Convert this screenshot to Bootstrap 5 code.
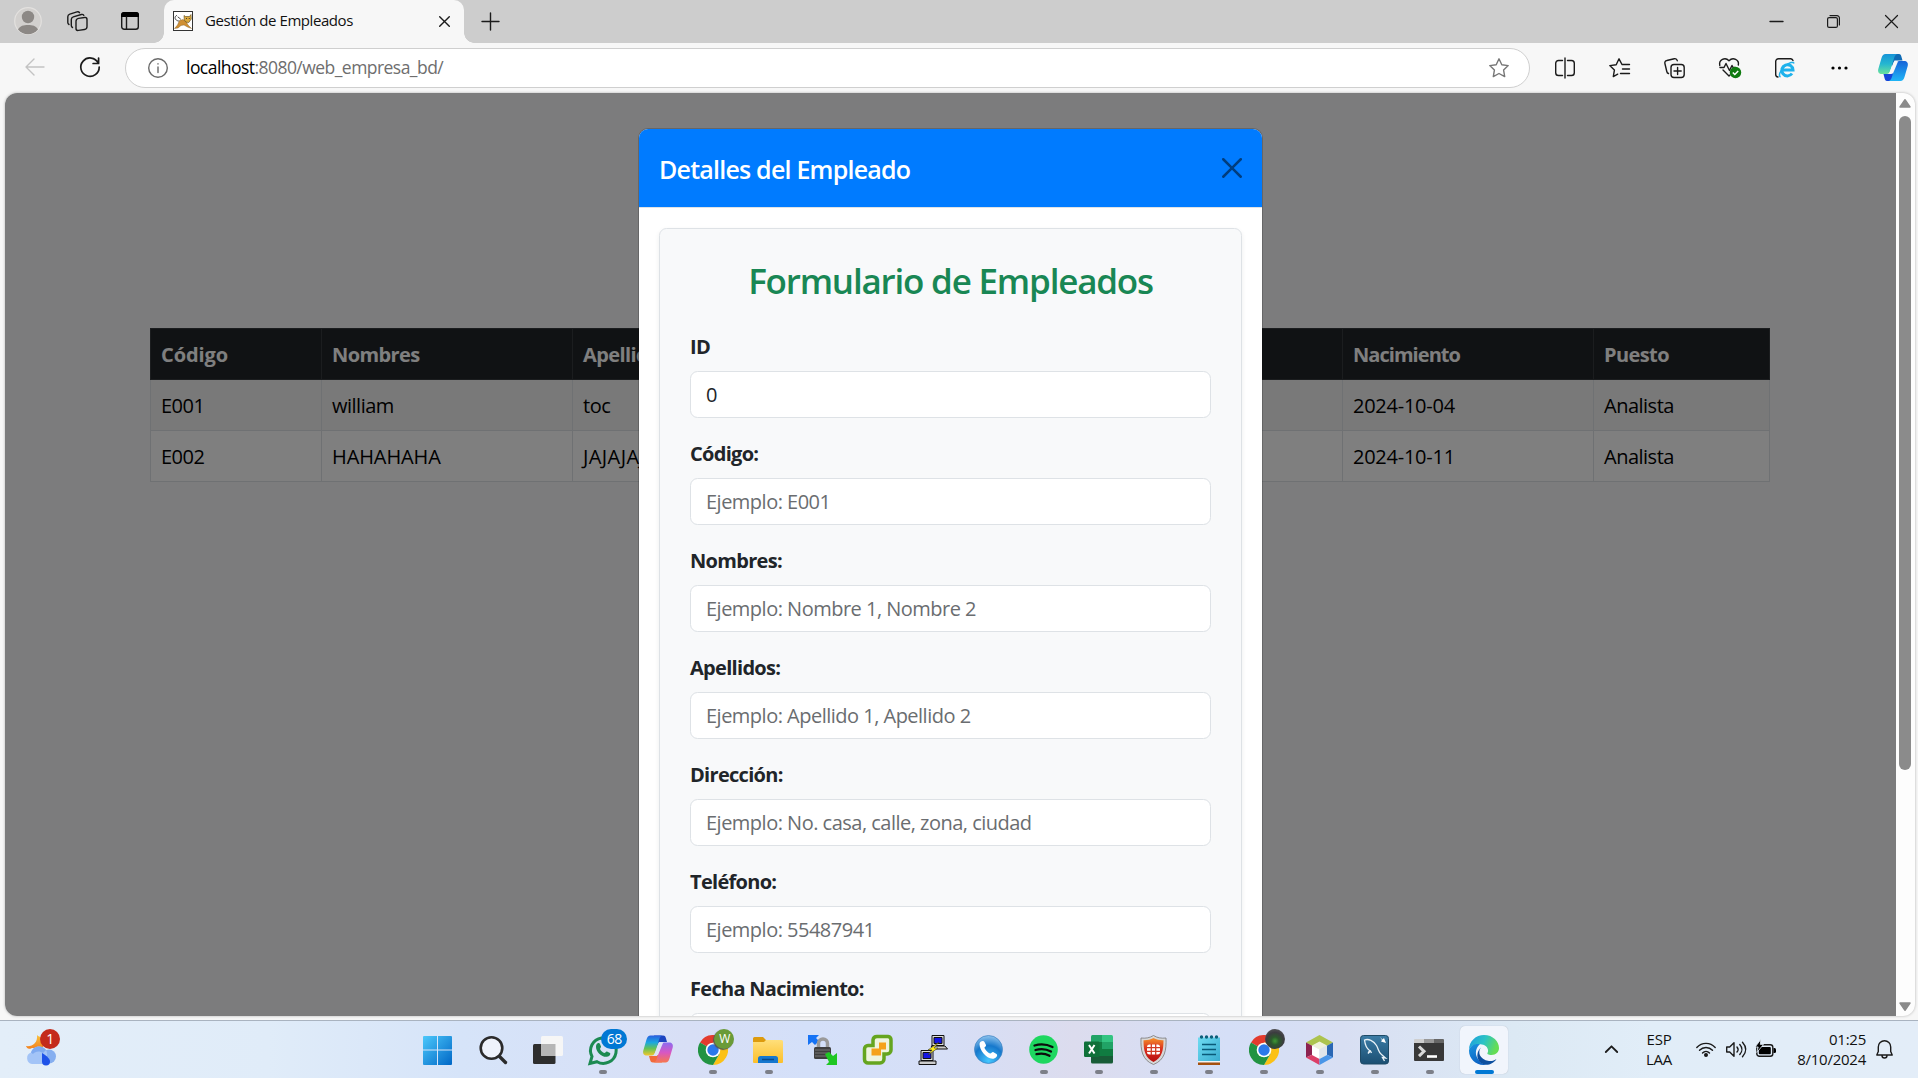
<!DOCTYPE html>
<html lang="es">
<head>
<meta charset="utf-8">
<title>Gestión de Empleados</title>
<link href="https://cdn.jsdelivr.net/npm/bootstrap@5.3.0/dist/css/bootstrap.min.css" rel="stylesheet">
<style>
html{font-size:20px}
body{width:1918px;height:1078px;overflow:hidden;background:#f7f7f7;font-family:"Open Sans","Noto Sans",sans-serif;letter-spacing:-.5px}
svg{display:block;flex:none;overflow:visible}
.ln{fill:none;stroke:#1b1b1b;stroke-width:1.4;stroke-linecap:round;stroke-linejoin:round}
/* window chrome */
.tabstrip{height:43px;background:#cdcdcd;padding-bottom:1px}
.strip-left{width:164px;padding-left:14px}
.tab-active{width:300px;height:43px;margin-bottom:-1px;background:#f7f7f7;border-radius:10px 10px 0 0;padding:0 14px 1px 9px;position:relative;font-size:15px;color:#111;letter-spacing:-.43px}
.tab-active::before,.tab-active::after{content:"";position:absolute;bottom:0;width:10px;height:10px}
.tab-active::before{left:-10px;background:radial-gradient(circle at 0 0,transparent 9.5px,#f7f7f7 10px)}
.tab-active::after{right:-10px;background:radial-gradient(circle at 100% 0,transparent 9.5px,#f7f7f7 10px)}
.tab-label{margin-left:12px;padding-bottom:2px}
.win-btns{padding-right:20px}
.toolbar{height:50px;padding:5px 0 0 25px}
.nav-btns{height:39px;gap:36px;padding-bottom:1px}
.omnibox{width:1405px;height:40px;margin-left:25px;border:1px solid #cfcfcf;border-radius:20px;background:#fff;padding:0 20px 1px 22px;font-size:17.5px;letter-spacing:-.54px;color:#6e6e6e}
.tool-icons{height:39px;margin-left:7px}
.slot{width:55px;display:flex;justify-content:center;align-items:center}
.slot:last-child{width:51px}
/* page */
.frame{height:923px;margin-left:5px;width:1910px;border-radius:12px;background:#fdfdfd;box-shadow:0 0 3px rgba(0,0,0,.28)}
.doc{width:1891px;background:#f8f9fa;position:relative}
.emp-wrap{width:1620px;margin:235px 0 0 145px}
.emp-tbl{table-layout:fixed;--bs-table-color:#000;--bs-table-striped-color:#000;--bs-table-bg:#fff}
.emp-tbl th,.emp-tbl td{white-space:nowrap;padding:11px 10px 9px}
.emp-tbl th{letter-spacing:-.6px}
.emp-tbl th.wide{letter-spacing:-.1px}
.emp-tbl th.tight{letter-spacing:-.95px}
.emp-tbl td.fecha{letter-spacing:-.25px}
.emp-tbl td.caps{letter-spacing:-.1px}
.emp-tbl td.caps-j{letter-spacing:.4px}
.shade.modal{position:absolute;inset:0;z-index:5;background:rgba(0,0,0,.5);overflow:hidden}
.dlg{width:625px;margin:35px auto 0;height:1300px}
.dlg .modal-header{background:#007bff}
.dlg .modal-title{font-weight:600;letter-spacing:-.78px;padding-top:2px;margin-bottom:-2px}
.form-title{font-size:35px;font-weight:600;letter-spacing:-1.2px;line-height:42px;padding-top:1px;margin-top:0}
h3.form-title.mb-4{margin-bottom:29px!important}
.form-label{letter-spacing:-.7px;padding-top:1px;margin-bottom:9px}
.form-control{letter-spacing:-.51px;padding-top:8.5px;padding-bottom:6.5px}
.form-control::placeholder{color:#6a6d70}
.sbar{width:19px;padding:6px 1px 5px 0}
.thumb{width:12px;height:654px;border-radius:6px;background:#8b8b8b;margin-top:8px}
/* taskbar */
.gap-strip{height:4px}
.tbar{height:58px;border-top:1px solid #a9b3c0;background:linear-gradient(90deg,#e3eef9 0,#e0ecf9 14%,#d6e4f9 24%,#d8dff6 36%,#d4e0f9 42%,#d6dff7 49%,#dcdcee 56%,#d5dff7 64%,#d8dff3 70%,#dce9f4 79%,#e1edf8 86%,#e3edf8 100%);color:#111}
.tbar-left{width:410px;padding:14px 0 0 26px}
.app{width:55.1px;height:57px;padding-top:14px;position:relative}
.app::after{content:"";position:absolute;left:24px;top:49px;width:8px;height:4px;border-radius:2px}
.app.run::after{background:#7c7f88}
.app.now::after{background:#0078d4;left:18px;width:19px}
.app.now::before{content:"";position:absolute;left:3px;top:5px;width:48px;height:48px;border-radius:5px;background:#f1f5fc;box-shadow:0 0 1px #a8b0bd}
.app svg{position:relative;z-index:1}
.pip{position:absolute;z-index:2;top:8px;height:20px;border-radius:10px;color:#fff;font-size:14px;line-height:20px;text-align:center;letter-spacing:-.4px}
.tray{font-size:15px;line-height:20px;letter-spacing:-.25px;padding:0 25px 1px 0}
</style>
<script src="https://cdn.jsdelivr.net/npm/bootstrap@5.3.0/dist/js/bootstrap.bundle.min.js"></script>
</head>
<body class="d-flex flex-column">
<svg width="0" height="0" class="position-absolute">
<defs>
<linearGradient id="gWin" x2="1" y2="1"><stop stop-color="#4cc8fb"/><stop offset="1" stop-color="#0067c6"/></linearGradient>
<linearGradient id="gFold" x2="0" y2="1"><stop stop-color="#ffdf7a"/><stop offset="1" stop-color="#fcbf2a"/></linearGradient>
<linearGradient id="gCl" x2="0" y2="1"><stop stop-color="#2a5fe0"/><stop offset=".35" stop-color="#1ba7e0"/><stop offset=".65" stop-color="#64c356"/><stop offset="1" stop-color="#f4c62c"/></linearGradient>
<linearGradient id="gCr" x2="0" y2="1"><stop stop-color="#8b6cf0"/><stop offset=".5" stop-color="#d757c4"/><stop offset="1" stop-color="#f7774d"/></linearGradient>
<linearGradient id="gTl" x2="0" y2="1"><stop stop-color="#1694d8"/><stop offset=".5" stop-color="#25b7d0"/><stop offset="1" stop-color="#6be29b"/></linearGradient>
<linearGradient id="gTr" x2="0" y2="1"><stop stop-color="#1764d8"/><stop offset="1" stop-color="#1fb5f6"/></linearGradient>
<linearGradient id="gE1" x2="1" y2=".3"><stop stop-color="#1b9be0"/><stop offset=".55" stop-color="#2bc3c5"/><stop offset="1" stop-color="#64dd55"/></linearGradient>
<linearGradient id="gE2" x2=".4" y2="1"><stop stop-color="#1a95df"/><stop offset="1" stop-color="#0b62c4"/></linearGradient>
<radialGradient id="gPh" cx=".5" cy=".9" r=".9"><stop stop-color="#45c8ff"/><stop offset=".6" stop-color="#1678cc"/><stop offset="1" stop-color="#8fc4ee"/></radialGradient>
<linearGradient id="gSh" x2="0" y2="1"><stop stop-color="#f5902a"/><stop offset=".5" stop-color="#d9281c"/><stop offset="1" stop-color="#b5120f"/></linearGradient>
<linearGradient id="gSql" x2="0" y2="1"><stop stop-color="#3b7ca6"/><stop offset="1" stop-color="#1b4f72"/></linearGradient>
<linearGradient id="gNote" x2="1" y2="1"><stop stop-color="#6fdcf2"/><stop offset="1" stop-color="#38abcf"/></linearGradient>
<linearGradient id="gMoon" x2="0" y2="1"><stop stop-color="#f9c23c"/><stop offset="1" stop-color="#f3811f"/></linearGradient>
<linearGradient id="gCloud" x2="0" y2="1"><stop stop-color="#78a8f2"/><stop offset=".6" stop-color="#b8d3fa"/><stop offset="1" stop-color="#6d9cec"/></linearGradient>
<symbol id="chrome" viewBox="0 0 30 30"><path d="M15 15 2 7.500A15 15 0 0 1 28 7.500H15z" fill="#e33b2e"/><path d="M15 7.500H28A15 15 0 0 1 15 30L21.500 18.700z" fill="#fbc116"/><path d="M2 7.500A15 15 0 0 0 15 30L21.500 18.700 15 15z" fill="#229342"/><circle cx="15" cy="15" r="7.300" fill="#fff"/><circle cx="15" cy="15" r="5.700" fill="#2c78ea"/></symbol>
</defs>
</svg>

<header class="tabstrip d-flex align-items-center flex-shrink-0">
  <div class="strip-left d-flex align-items-center">
    <svg width="28" height="28" viewBox="0 0 28 28"><circle cx="14" cy="14" r="13.3" fill="#d2d0ce" stroke="#e3e1df" stroke-width="1.2"/><circle cx="14" cy="10" r="6.2" fill="#8c8885"/><path d="M4 22.5c2-3.8 5.500-4.500 10-4.500s8 .7 10 4.500a13 13 0 0 1-20 0z" fill="#8c8885"/></svg>
    <svg class="ln" style="margin-left:25px" width="21" height="21" viewBox="0 0 21 21"><rect x="9" y="7" width="11" height="12" rx="2.500" transform="skewY(-9) translate(0 2.200)"/><path d="M5.500 16.500c-1-.5-1.200-1-1.200-2V8.500c0-1.500.7-2.300 2-2.700l8-2.300c1.200-.3 2 0 2.500.8M2 13.500c-1-.5-1.200-1-1.200-2V5.800c0-1.500.7-2.300 2-2.700L10 .9c1.200-.3 2 0 2.500.8"/></svg>
    <svg style="margin-left:33px" width="18" height="18" viewBox="0 0 18 18"><rect x=".7" y=".7" width="16.600" height="16.600" rx="2.500" class="ln"/><path d="M0 5V3a3 3 0 0 1 3-3h12a3 3 0 0 1 3 3v2z"/><path d="M5.500 5v12" class="ln"/></svg>
  </div>
  <div class="tab-active d-flex align-items-center">
    <svg width="20" height="20" viewBox="0 0 20 20"><rect x=".5" y=".5" width="19" height="19" fill="#fff" stroke="#333"/><path d="M1.500 17.500l3-3.500 2-4.500 3.500-1 3.500 2.500 1.500 3 3.500 3.500-4-1.500-3.500-2-3 .5-3 2.500z" fill="#cf8f33" stroke="#7a5620" stroke-width=".4"/><path d="M11 4.500l1.500 1h4L18 3.500l.3 4.500-2.500 3.500-3-.5-1.500-2z" fill="#dca93c" stroke="#5b4515" stroke-width=".6"/><path d="M13 7.500h.8M15.800 7.500h.8" stroke="#222"/><path d="M5.500 10C1.500 9.500 1 5.500 3.500 4.500M5 6l2.500 2" class="ln" style="stroke-width:.8"/></svg>
    <span class="tab-label">Gestión de Empleados</span>
    <svg class="ln ms-auto" width="11" height="11" viewBox="0 0 11 11"><path d="M.7.7l9.600 9.600M10.300.7L.7 10.300"/></svg>
  </div>
  <svg class="ln" style="margin-left:18px" width="17" height="17" viewBox="0 0 17 17"><path d="M8.500 0v17M0 8.500h17"/></svg>
  <div class="win-btns d-flex align-items-center ms-auto">
    <svg class="ln" width="13" height="13" viewBox="0 0 13 13"><path d="M0 6.500h13"/></svg>
    <svg class="ln" style="margin-left:44px;stroke-width:1.200" width="13" height="13" viewBox="0 0 13 13"><rect x=".6" y="2.600" width="9.800" height="9.800" rx="1.500"/><path d="M3 .6h7a2.400 2.400 0 0 1 2.400 2.400v7"/></svg>
    <svg class="ln" style="margin-left:45px;stroke-width:1.200" width="13" height="13" viewBox="0 0 13 13"><path d="M.5.5l12 12M12.500.5l-12 12"/></svg>
  </div>
</header>

<div class="toolbar d-flex flex-shrink-0">
  <div class="nav-btns d-flex align-items-center">
    <svg class="ln" style="stroke:#c3c3c3" width="19" height="18" viewBox="0 0 19 18"><path d="M9 1L1 9l8 8M1 9h18"/></svg>
    <svg class="ln" style="stroke-width:1.700" width="20" height="20" viewBox="0 0 20 20"><path d="M18.200 6A9.200 9.200 0 1 0 19.200 10M18.600 1v5.500h-5.500"/></svg>
  </div>
  <div class="omnibox d-flex align-items-center">
    <svg class="ln" style="stroke:#6a6a6a" width="20" height="20" viewBox="0 0 20 20"><circle cx="10" cy="10" r="9.300"/><path d="M10 9v5.500M10 5.800v.3"/></svg>
    <span style="margin-left:18px"><span class="text-black">localhost</span>:8080/web_empresa_bd/</span>
    <svg class="ln ms-auto" style="stroke:#777" width="20" height="20" viewBox="0 0 20 20"><path d="M10 .8l2.800 5.900 6.400.9-4.600 4.500 1.100 6.500L10 15.500l-5.700 3.100 1.100-6.500L.8 7.600l6.400-.9z"/></svg>
  </div>
  <div class="tool-icons d-flex">
    <span class="slot"><svg class="ln" width="20" height="20" viewBox="0 0 20 20"><path d="M10 0v20M7.500 2.500H3.500A2.800 2.800 0 0 0 .7 5.300v9.400a2.800 2.800 0 0 0 2.800 2.800h4M12.500 2.500h4a2.800 2.800 0 0 1 2.800 2.800v9.400a2.800 2.800 0 0 1-2.800 2.800h-4"/></svg></span>
    <span class="slot"><svg class="ln" width="21" height="20" viewBox="0 0 21 20"><path d="M13 6.500L10 .8 7.200 6.700.8 7.600l4.600 4.500-1.100 6.500 4.400-2.400M13 6.500h7.500M13.500 11h7M11.500 15.500h9"/></svg></span>
    <span class="slot"><svg class="ln" width="21" height="20" viewBox="0 0 21 20"><rect x="7" y="6.500" width="13.200" height="13" rx="3"/><path d="M13.600 9.500v7M10 13h7.200M4.500 15.500c-1-.3-1.500-1-1.700-2L.9 5.500C.5 4 1.300 2.800 2.800 2.500l7.500-1.800c1.500-.3 2.600.4 3 2"/></svg></span>
    <span class="slot"><svg width="22" height="21" viewBox="0 0 22 21"><path class="ln" d="M.8 8.500C-.5 3 6-.5 10 3.800 14-.5 20.500 3 19.300 8M4 13l6 6 1-1M1 10.500h4l2-4 3.500 7 2.500-5 1 2h2"/><circle cx="16.500" cy="15.500" r="5.700" fill="#0f7b10"/><path d="M13.800 15.500l2 2 3.400-3.600" fill="none" stroke="#fff" stroke-width="1.500"/></svg></span>
    <span class="slot"><svg width="20" height="20" viewBox="0 0 20 20"><path class="ln" d="M3 19a2.500 2.500 0 0 1-2.300-2.500v-13A2.800 2.800 0 0 1 3.500.7h12.300A2.800 2.800 0 0 1 18 2.500"/><path d="M17 15.500A5.600 5.600 0 1 1 18 12H7.500" fill="none" stroke="#1fb2ec" stroke-width="3"/><path d="M5.500 19c-2-1-1-6 4-10.500s9-5 9.500-3" fill="none" stroke="#1fb2ec" stroke-width="1.500"/></svg></span>
    <span class="slot"><svg width="17" height="4" viewBox="0 0 17 4"><circle cx="2" cy="2" r="1.600"/><circle cx="8.500" cy="2" r="1.600"/><circle cx="15" cy="2" r="1.600"/></svg></span>
    <span class="slot"><svg width="30" height="27" viewBox="0 0 30 27"><path d="M21 0c1.500 0 2 1 2.500 3l1 3.500h-8L14 13 11 0z" fill="#0f6bb5"/><path d="M9 27c-1.500 0-2-1-2.500-3L5.500 20h8l3-6 3 13z" fill="#1646d8"/><path d="M7.500 0H19c-2 1-2.700 3-3.500 6l-3 10c-.7 2.500-2 4-4 4H4c-3 0-4.500-2-3.700-5L3.500 4C4.300 1.300 5.500 0 7.500 0z" fill="url(#gTl)"/><path d="M22.500 27H11c2-1 2.700-3 3.500-6l3-10c.7-2.500 2-4 4-4H26c3 0 4.500 2 3.700 5l-3.200 11c-.8 2.700-2 4-4 4z" fill="url(#gTr)"/><path d="M16 7.500h4l-5 12h-4z" fill="#f7f7f7"/></svg></span>
  </div>
</div>

<main class="frame d-flex overflow-hidden flex-shrink-0">
  <section class="doc overflow-hidden">
    <div class="emp-wrap">
      <table class="table table-bordered table-striped emp-tbl mb-0">
        <colgroup><col style="width:171px"><col style="width:251px"><col style="width:250px"><col style="width:260px"><col style="width:260px"><col style="width:251px"><col></colgroup>
        <thead class="table-dark"><tr><th class="wide">Código</th><th>Nombres</th><th>Apellidos</th><th></th><th></th><th class="tight">Nacimiento</th><th>Puesto</th></tr></thead>
        <tbody>
          <tr><td>E001</td><td>william</td><td>toc</td><td></td><td></td><td class="fecha">2024-10-04</td><td>Analista</td></tr>
          <tr><td>E002</td><td class="caps">HAHAHAHA</td><td class="caps-j">JAJAJAJA</td><td></td><td></td><td class="fecha">2024-10-11</td><td>Analista</td></tr>
        </tbody>
      </table>
    </div>
    <div class="shade modal d-block">
      <div class="dlg modal-content">
        <div class="modal-header">
          <h5 class="modal-title text-white">Detalles del Empleado</h5>
          <button type="button" class="btn-close" aria-label="Cerrar"></button>
        </div>
        <div class="modal-body">
          <form class="border rounded bg-light shadow-sm p-4">
            <h3 class="form-title text-center text-success mb-4">Formulario de Empleados</h3>
            <div class="mb-3"><label class="form-label fw-bold">ID</label><input class="form-control" value="0"></div>
            <div class="mb-3"><label class="form-label fw-bold">Código:</label><input class="form-control" placeholder="Ejemplo: E001"></div>
            <div class="mb-3"><label class="form-label fw-bold">Nombres:</label><input class="form-control" placeholder="Ejemplo: Nombre 1, Nombre 2"></div>
            <div class="mb-3"><label class="form-label fw-bold">Apellidos:</label><input class="form-control" placeholder="Ejemplo: Apellido 1, Apellido 2"></div>
            <div class="mb-3"><label class="form-label fw-bold">Dirección:</label><input class="form-control" placeholder="Ejemplo: No. casa, calle, zona, ciudad"></div>
            <div class="mb-3"><label class="form-label fw-bold">Teléfono:</label><input class="form-control" placeholder="Ejemplo: 55487941"></div>
            <div class="mb-3"><label class="form-label fw-bold">Fecha Nacimiento:</label><input class="form-control"></div>
          </form>
        </div>
      </div>
    </div>
  </section>
  <div class="sbar d-flex flex-column align-items-center">
    <svg width="12" height="9" viewBox="0 0 12 9"><path d="M6 .8L11 8H1z" fill="#8b8b8b" stroke="#8b8b8b" stroke-width="1.500" stroke-linejoin="round"/></svg>
    <div class="thumb"></div>
    <svg class="mt-auto" width="12" height="9" viewBox="0 0 12 9"><path d="M6 8.200L1 1h10z" fill="#8b8b8b" stroke="#8b8b8b" stroke-width="1.500" stroke-linejoin="round"/></svg>
  </div>
</main>
<div class="gap-strip flex-shrink-0"></div>

<footer class="tbar d-flex flex-shrink-0">
  <div class="tbar-left position-relative">
    <svg width="30" height="30" viewBox="0 0 30 30"><path d="M11 0c3 3 5 1 6 4v9H6C2 15 1 13 0 11c6 1 12-3 11-11z" fill="url(#gMoon)"/><circle cx="23" cy="21.500" r="7" fill="#86aff0"/><path d="M6 29a6 6 0 0 1-1-11.500A8.500 8.500 0 0 1 20 15c2 3 1 10 0 14z" fill="#a3c4f7"/><path d="M5 17.500A8.500 8.500 0 0 1 20 15l-3 3c-3-2.500-8-2-10 1z" fill="#7faaf0"/><path d="M16 18c5 3 8 6 8 8.500a4 4 0 0 1-8 0z" fill="#1e52e8"/></svg>
    <span class="pip" style="left:40px;width:20px;background:#c42b1c">1</span>
  </div>
  <div class="d-flex">
    <div class="app d-flex justify-content-center"><svg width="29" height="30" viewBox="0 0 29 30"><path d="M1 1h13v13.500H0V2a1 1 0 0 1 1-1zM15 1h13a1 1 0 0 1 1 1v12.500H15zM0 15.500h14V30H1a1 1 0 0 1-1-1zM15 15.500h14V29a1 1 0 0 1-1 1H15z" fill="url(#gWin)"/></svg></div>
    <div class="app d-flex justify-content-center"><svg width="28" height="30" viewBox="0 0 28 30"><circle cx="12.500" cy="13" r="10.800" fill="#eef2fb" stroke="#2b2b2b" stroke-width="2.600"/><path d="M20.500 21.500l6 6" stroke="#2b2b2b" stroke-width="3.400" stroke-linecap="round"/></svg></div>
    <div class="app d-flex justify-content-center"><svg width="30" height="30" viewBox="0 0 30 30"><rect x="0" y="9" width="22.500" height="20" rx="1.500" fill="#2e2e2e"/><rect x="8" y="1" width="22" height="20" rx="1.500" fill="#f6f6f6"/><path d="M8 9h14.500v12H9.500A1.500 1.500 0 0 1 8 19.500z" fill="#b6b6b6"/></svg></div>
    <div class="app run d-flex justify-content-center"><svg width="30" height="30" viewBox="0 0 30 30"><path d="M2 28.500l2-7A12.800 12.800 0 1 1 9 26.700z" fill="none" stroke="#1c8a52" stroke-width="3"/><path d="M8.500 9.500c1-2 3-2 3.500-.5l1 2.500c0 1.200-1 1.700-1 2.500 1 2 2.500 3.500 4.500 4 1 0 1.500-2 2.500-1.500l3 1.500c1 1-.5 3.500-3 3.800C14 22.500 8 17 8 12c0-1 0-1.800.5-2.500z" fill="#1c8a52"/></svg><span class="pip" style="left:26px;width:26px;background:#0078d4">68</span></div>
    <div class="app d-flex justify-content-center"><svg width="30" height="28" viewBox="0 0 30 27"><path d="M20 0c2 0 2.500 1 3 3l1 3.500h-8L13 12 11 0z" fill="#1c44c0"/><path d="M10 27c-2 0-2.500-1-3-3L6 20.500h8l3-5.500 2 12z" fill="#f26a3a"/><path d="M7.500 0H19c-2 1-2.700 3-3.500 6l-3 10c-.7 2.500-2 4-4 4H4c-3 0-4.500-2-3.700-5L3.500 4C4.300 1.300 5.500 0 7.500 0z" fill="url(#gCl)"/><path d="M22.500 27H11c2-1 2.700-3 3.500-6l3-10c.7-2.500 2-4 4-4H26c3 0 4.500 2 3.700 5l-3.200 11c-.8 2.700-2 4-4 4z" fill="url(#gCr)"/><path d="M16 7.500h4l-5 12h-4z" fill="#dfe1f6"/></svg></div>
    <div class="app run d-flex justify-content-center"><svg width="30" height="30"><use href="#chrome"/></svg><span class="pip" style="left:29px;width:20px;background:#6a9b38;font-size:12px;box-shadow:-1px 1px 1px #555">W</span></div>
    <div class="app run d-flex justify-content-center"><svg width="30" height="30" viewBox="0 0 30 30"><path d="M0 3.500A1.500 1.500 0 0 1 1.500 2H10l3 3v5H0z" fill="#dd9b0e"/><path d="M0 7h11l2-2h15.500A1.500 1.500 0 0 1 30 6.500V27a1 1 0 0 1-1 1H1a1 1 0 0 1-1-1z" fill="url(#gFold)"/><path d="M5 28v-4.500A2.500 2.500 0 0 1 7.500 21h15a2.500 2.500 0 0 1 2.500 2.500V28z" fill="#1678cf"/><path d="M9 24.500h12" stroke="#0a4a8a" stroke-width="1.500"/></svg></div>
    <div class="app d-flex justify-content-center"><svg width="30" height="30" viewBox="0 0 30 30"><path d="M0 0h11L8 3l3 3-4 4-3-3-4 3z" fill="#1673f5"/><path d="M10.500 13V8.500a4.500 4.500 0 0 1 9 0V13" fill="none" stroke="#9a9a9a" stroke-width="3.500"/><rect x="6" y="12" width="17" height="12" rx="1.500" fill="#3f3f3f"/><path d="M7 15h15M7 18h15M7 21h15" stroke="#777"/><path d="M17 19l4-2 4 4 4-3v12H18l3-3z" fill="#1fc723"/></svg></div>
    <div class="app d-flex justify-content-center"><svg width="30" height="30" viewBox="0 0 30 30"><path d="M10 5a4 4 0 0 1 4-3.500h11A3.500 3.500 0 0 1 28 5v10a4 4 0 0 1-4 4h-3v5a4 4 0 0 1-4 4H5a3.500 3.500 0 0 1-3.500-3.500V14A3.500 3.500 0 0 1 5 10.500h5z" fill="#eef4dd" stroke="#65a51f" stroke-width="3.500"/><path d="M16 7.500h7v7h-5v6H8.500v-7H16z" fill="#f5a21a"/></svg></div>
    <div class="app d-flex justify-content-center"><svg width="30" height="30" viewBox="0 0 30 30"><g stroke="#111"><path d="M14 .5h12v10H14z" fill="#ddd"/><path d="M16 2.500h8v6h-8z" fill="#1414e6"/><path d="M13 11h14l2.500 3h-14z" fill="#ccc"/><path d="M3 15.500h12v10H3z" fill="#ddd"/><path d="M5 17.500h8v6H5z" fill="#1414e6"/><path d="M1 26h17v3.500H1z" fill="#ccc"/></g><path d="M21 7L10 15h4l-4 5 10-7h-4z" fill="#ffee16" stroke="#333" stroke-width=".6"/></svg></div>
    <div class="app d-flex justify-content-center"><svg width="29" height="29" viewBox="0 0 29 29"><circle cx="14.500" cy="14.500" r="14" fill="url(#gPh)" stroke="#3b7fc0" stroke-width=".7"/><path d="M5.500 9c0-2.500 4-4 5-2l1.500 3c.5 1.500-2 2-1.500 3 1.500 3 3.500 4.500 5.500 5.500 1.200.5 2-2 3.500-1.300l3 1.800c2 1.500-1 4.800-4 4.800C12 23.500 5.500 15 5.500 9z" fill="#fff"/></svg></div>
    <div class="app run d-flex justify-content-center"><svg width="29" height="29" viewBox="0 0 29 29"><circle cx="14.500" cy="14.500" r="14.300" fill="#1ed760"/><path d="M5.500 10.500c6-1.800 12.500-1.200 18 1.500M6.500 15c5-1.500 11-1 15.500 1.500M7.500 19.200c4.500-1.200 9-.7 13 1.500" fill="none" stroke="#0c0c0c" stroke-width="2.300" stroke-linecap="round"/></svg></div>
    <div class="app run d-flex justify-content-center"><svg width="29" height="29" viewBox="0 0 29 29"><path d="M7 1.500A1.500 1.500 0 0 1 8.500 0H18v7.500H7z" fill="#21a366"/><path d="M18 0h9.500A1.500 1.500 0 0 1 29 1.500v6H18z" fill="#33c481"/><path d="M7 7h11v14.500H7z" fill="#107c41"/><path d="M18 7h11v7H18z" fill="#21a366"/><path d="M18 14h11v7H18z" fill="#107c41"/><path d="M7 21h22v6a1.500 1.500 0 0 1-1.500 1.500h-19A1.500 1.500 0 0 1 7 27z" fill="#185c37"/><rect y="6.500" width="15.500" height="15.500" rx="1.200" fill="#0f7039"/><path d="M5 10l5.500 8.500M10.500 10L5 18.500" stroke="#fff" stroke-width="2"/></svg></div>
    <div class="app run d-flex justify-content-center"><svg width="27" height="30" viewBox="0 0 27 30"><path d="M13.500.5c4 2.500 8 3 12.500 2.500C26.500 15 25 25 13.500 29.500 2 25 .5 15 1 3c4.500.5 8.500 0 12.500-2.500z" fill="#d7d7d7" stroke="#777" stroke-width=".8"/><path d="M13.500 3c3.500 2 6.500 2.300 10 2.200C23.500 15 22 23 13.500 27 5 23 3.500 15 3.500 5.200c3.500.1 6.500-.2 10-2.200z" fill="url(#gSh)"/><rect x="7" y="9.500" width="13" height="10" rx="2.500" fill="#fff"/><path d="M6 12.700h15M6 16.300h15M11.300 9v11M15.700 9v11" stroke="#d23a22" stroke-width="1.300"/></svg></div>
    <div class="app run d-flex justify-content-center"><svg width="22" height="31" viewBox="0 0 22 31"><path d="M0 2.500h22V27H0z" fill="url(#gNote)"/><path d="M0 26h22v1.500H0z" fill="#f4f4f4"/><path d="M0 27.500h22v2.500H0z" fill="#a4500f"/><path d="M4 9.500h14M4 14.500h14M4 19.500h14" stroke="#0a5a78" stroke-width="1.700"/><g fill="#0c5f7a"><circle cx="3.500" cy="2" r="1.700"/><circle cx="8.500" cy="2" r="1.700"/><circle cx="13.500" cy="2" r="1.700"/><circle cx="18.500" cy="2" r="1.700"/></g></svg></div>
    <div class="app run d-flex justify-content-center"><svg width="30" height="30"><use href="#chrome"/></svg><span class="pip" style="left:29px;width:20px;background:radial-gradient(circle at 50% 60%,#3f9a35 0,#2c5a2c 25%,#3c3c40 55%,#6a6a6c 100%)"></span></div>
    <div class="app run d-flex justify-content-center"><svg width="27" height="30" viewBox="0 0 27 30"><path d="M13.500 0L27 7.500 20.500 11l-7-4-7 4L0 7.500z" fill="#acc34e"/><path d="M0 7.500L6.500 11v8.500L0 22.500z" fill="#8c2350"/><path d="M0 22.500l6.500-3 7 3.500v7z" fill="#dc3f68"/><path d="M27 7.500L20.500 11v8.500l6.500 3z" fill="#2a67b4"/><path d="M27 22.500l-6.500-3-7 3.500v7z" fill="#4a96e8"/><path d="M13.500 6.500l7.500 4-7.500 4-7.500-4z" fill="#eff1dc"/><path d="M6 10.500l7.500 4V24L6 20z" fill="#fff"/><path d="M21 10.500l-7.500 4V24l7.500-4z" fill="#dfe5ea"/></svg></div>
    <div class="app run d-flex justify-content-center"><svg width="29" height="30" viewBox="0 0 29 30"><rect x=".5" y=".5" width="28" height="28.500" rx="3" fill="url(#gSql)" stroke="#1e4a66"/><path d="M8 18.500l1.500-3C6 13 5 9 4.500 5c4-1.500 9 .5 12 5.500 2 3.500 2 7 5 9l4 3.500-3-.5 2 3.500M8 18.500l2.500-2.500 1 2" fill="none" stroke="#e8f1f6" stroke-width="1.300"/><path d="M20 2l2.500 2.500L24 3l2 5-5-1.500L22 5z" fill="#fff"/></svg></div>
    <div class="app run d-flex justify-content-center"><svg width="30" height="30" viewBox="0 0 30 30"><path d="M0 7.500h30V25a1 1 0 0 1-1 1H1a1 1 0 0 1-1-1z" fill="#383838"/><path d="M0 5a1 1 0 0 1 1-1h9v4H0z" fill="#cfcfcf"/><path d="M10 4h10v4H10z" fill="#999"/><path d="M20 4h9a1 1 0 0 1 1 1v3H20z" fill="#666"/><path d="M5 11.500l5 4.800-5 4.800" fill="none" stroke="#d8d8d8" stroke-width="3"/><path d="M13 21.500h10" stroke="#fff" stroke-width="2.600"/></svg></div>
    <div class="app now d-flex justify-content-center"><svg width="30" height="30" viewBox="0 0 30 30"><path d="M0 15C0 6 7 0 15 0c9 0 15 6.500 15 13 0 4-3 7-7.500 7-3.500 0-4.500-1.200-4-2 1.500-2 .5-7.500-5.500-8.500C7 8.500 1 11 0 15z" fill="url(#gE1)"/><path d="M0 15.500C1 10.500 6 8 11 9.200c-4 3-5.500 9-2.500 14 2 3.500 5 6 9 6.500C8 31.500 0 24.500 0 15.500z" fill="url(#gE2)"/><path d="M12 12.500c-3.500 4-2 12 8 13.500 3 .4 5.500-.6 7.500-2-2.500 4-6.500 5.700-10 5.800C8 29 5.500 18.500 12 12.500z" fill="#0c4f9f"/></svg></div>
  </div>
  <div class="tray d-flex align-items-center ms-auto">
    <svg class="ln" style="stroke-width:1.800" width="13" height="8" viewBox="0 0 13 8"><path d="M.8 7l5.700-5.700L12.200 7"/></svg>
    <div class="text-center" style="width:30px;margin-left:26px">ESP<br>LAA</div>
    <svg class="ln" style="margin-left:22px" width="20" height="15" viewBox="0 0 20 15"><path d="M.8 5.500c5-5.500 13.400-5.500 18.400 0M3.500 8.300c3.600-3.800 9.400-3.800 13 0M6.500 11c2-2 5-2 7 0"/><circle cx="10" cy="13" r="1.300" fill="#1b1b1b"/></svg>
    <svg class="ln" style="margin-left:10px" width="20" height="17" viewBox="0 0 20 17"><path d="M.7 6h3L8 1.800v13.400L3.700 11h-3zM11 6c1.300 1.500 1.300 3.500 0 5M13.800 3.500c2.700 3 2.700 7 0 10M16.500 1.200c4 4.500 4 10 0 14.600"/></svg>
    <svg style="margin-left:10px" width="20" height="17" viewBox="0 0 20 17"><rect x=".8" y="3.800" width="16" height="11.500" rx="2.500" class="ln"/><rect x="2.800" y="6" width="12" height="7.300" rx="1"/><path d="M17.500 7h1a1.500 1.500 0 0 1 1.500 1.500v2a1.500 1.500 0 0 1-1.500 1.500h-1z"/><path d="M4.800-1.500L-.8 6H2.200L.8 11.500 7.500 3.500H4.300z" stroke="#e3edf8" stroke-width=".8"/></svg>
    <div class="text-end" style="width:80px;margin-left:10px">01:25<br>8/10/2024</div>
    <svg class="ln" style="margin-left:10px" width="17" height="19" viewBox="0 0 17 19"><path d="M.8 15l1.500-3.500V7a6.200 6.200 0 0 1 12.400 0v4.500L16.200 15zM6 15.500a2.500 2.500 0 0 0 5 0"/></svg>
  </div>
</footer>
</body>
</html>
